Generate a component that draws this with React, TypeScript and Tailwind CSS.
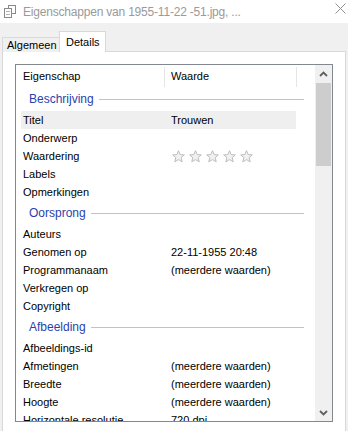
const font = { fontFamily: '"Liberation Sans", Arial, sans-serif' };

type Row = { label: string; value?: string; stars?: boolean; selected?: boolean };
type Group = { title: string; rows: Row[] };

const groups: Group[] = [
  {
    title: "Beschrijving",
    rows: [
      { label: "Titel", value: "Trouwen", selected: true },
      { label: "Onderwerp" },
      { label: "Waardering", stars: true },
      { label: "Labels" },
      { label: "Opmerkingen" },
    ],
  },
  {
    title: "Oorsprong",
    rows: [
      { label: "Auteurs" },
      { label: "Genomen op", value: "22-11-1955 20:48" },
      { label: "Programmanaam", value: "(meerdere waarden)" },
      { label: "Verkregen op" },
      { label: "Copyright" },
    ],
  },
  {
    title: "Afbeelding",
    rows: [
      { label: "Afbeeldings-id" },
      { label: "Afmetingen", value: "(meerdere waarden)" },
      { label: "Breedte", value: "(meerdere waarden)" },
      { label: "Hoogte", value: "(meerdere waarden)" },
      { label: "Horizontale resolutie", value: "720 dpi" },
    ],
  },
];

function Star() {
  return (
    <svg width="13" height="13" viewBox="0 0 13 13">
      <path
        d="M6.5 0.7 L8.2 4.6 L12.3 4.9 L9.2 7.6 L10.2 11.8 L6.5 9.6 L2.8 11.8 L3.8 7.6 L0.7 4.9 L4.8 4.6 Z"
        fill="#f1f1f1"
        stroke="#bdbdbd"
        strokeWidth="1"
        strokeLinejoin="round"
      />
    </svg>
  );
}

function Chevron({ up }: { up?: boolean }) {
  return (
    <svg width="9" height="6" viewBox="0 0 9 6">
      <polyline
        points={up ? "1,5 4.5,1.5 8,5" : "1,1 4.5,4.5 8,1"}
        fill="none"
        stroke="#606060"
        strokeWidth="1.8"
      />
    </svg>
  );
}

export default function App() {
  return (
    <div className="w-[348px] h-[431px] bg-[#f0f0f0] overflow-hidden text-black" style={font}>
      {/* Titelbalk */}
      <div className="h-[23px] bg-white flex items-center relative">
        <svg className="ml-[4px]" width="12" height="13" viewBox="0 0 12 13">
          <rect x="4.5" y="0.5" width="7" height="8" fill="white" stroke="#8a8a8a" />
          <rect x="0.5" y="3.5" width="7" height="9" fill="white" stroke="#8a8a8a" />
          <line x1="2" y1="6.5" x2="6" y2="6.5" stroke="#b0b0b0" />
          <line x1="2" y1="9.5" x2="6" y2="9.5" stroke="#b0b0b0" />
        </svg>
        <span className="ml-[7px] text-[12px] tracking-[-0.2px] text-[#9a9a9a] whitespace-nowrap">
          Eigenschappen van 1955-11-22 -51.jpg, ...
        </span>
        <svg className="absolute left-[335px] top-[3px]" width="11" height="11" viewBox="0 0 11 11">
          <path d="M0.5 0.5 L10.5 10.5 M10.5 0.5 L0.5 10.5" stroke="#8f8f8f" strokeWidth="1" />
        </svg>
      </div>

      {/* Tabs */}
      <div className="mt-[8px] h-[21px] pl-[2px] flex items-end relative z-10">
        <div className="h-[15px] w-[58px] border border-b-0 border-[#d9d9d9] bg-[#f0f0f0] text-[11px] leading-[13px] pl-[4px] pt-[1px]">
          Algemeen
        </div>
        <div className="h-[21px] w-[47px] -ml-px border border-b-0 border-[#d9d9d9] bg-white text-[11px] leading-[13px] pl-[6px] pt-[4px]">
          Details
        </div>
      </div>

      {/* Paneel */}
      <div className="-mt-px ml-[2px] w-[344px] h-[400px] bg-white border border-[#d9d9d9] pt-[12px] pl-[12px]">
        <div className="w-[318px] h-[358px] border border-[#828790] flex overflow-hidden">
          <div className="w-[299px] h-full overflow-hidden">
            {/* Kolomkoppen */}
            <div className="h-[22px] flex items-stretch text-[11px]">
              <div className="w-[148px] pl-[7px] flex items-center">Eigenschap</div>
              <div className="w-px bg-[#e5e5e5] mt-[2px]" />
              <div className="w-[131px] pl-[6px] flex items-center">Waarde</div>
              <div className="w-px bg-[#e5e5e5] mt-[2px]" />
            </div>

            {groups.map((g) => (
              <div key={g.title}>
                <div className="h-[24px] flex items-center pl-[13px] pr-[11px] gap-[5px]">
                  <span className="text-[12px] text-[#2a3fae]">{g.title}</span>
                  <div className="flex-1 h-px bg-[#b9c3da]" />
                </div>
                {g.rows.map((r) => (
                  <div
                    key={r.label}
                    className={
                      "h-[18px] ml-[5px] w-[275px] flex items-center text-[11px] whitespace-nowrap " +
                      (r.selected ? "bg-[#efefef]" : "")
                    }
                  >
                    <div className="w-[143px] pl-[2px]">{r.label}</div>
                    <div className="pl-[7px] flex items-center">
                      {r.stars ? (
                        <div className="flex gap-[4px] pl-[1px]">
                          <Star />
                          <Star />
                          <Star />
                          <Star />
                          <Star />
                        </div>
                      ) : (
                        r.value
                      )}
                    </div>
                  </div>
                ))}
              </div>
            ))}
          </div>

          {/* Schuifbalk */}
          <div className="w-[17px] h-full bg-[#f0f0f0] flex flex-col">
            <div className="h-[18px] flex items-center justify-center">
              <Chevron up />
            </div>
            <div className="h-[83px] mx-[1px] bg-[#cdcdcd]" />
            <div className="flex-1" />
            <div className="h-[17px] flex items-center justify-center">
              <Chevron />
            </div>
          </div>
        </div>
      </div>
    </div>
  );
}
